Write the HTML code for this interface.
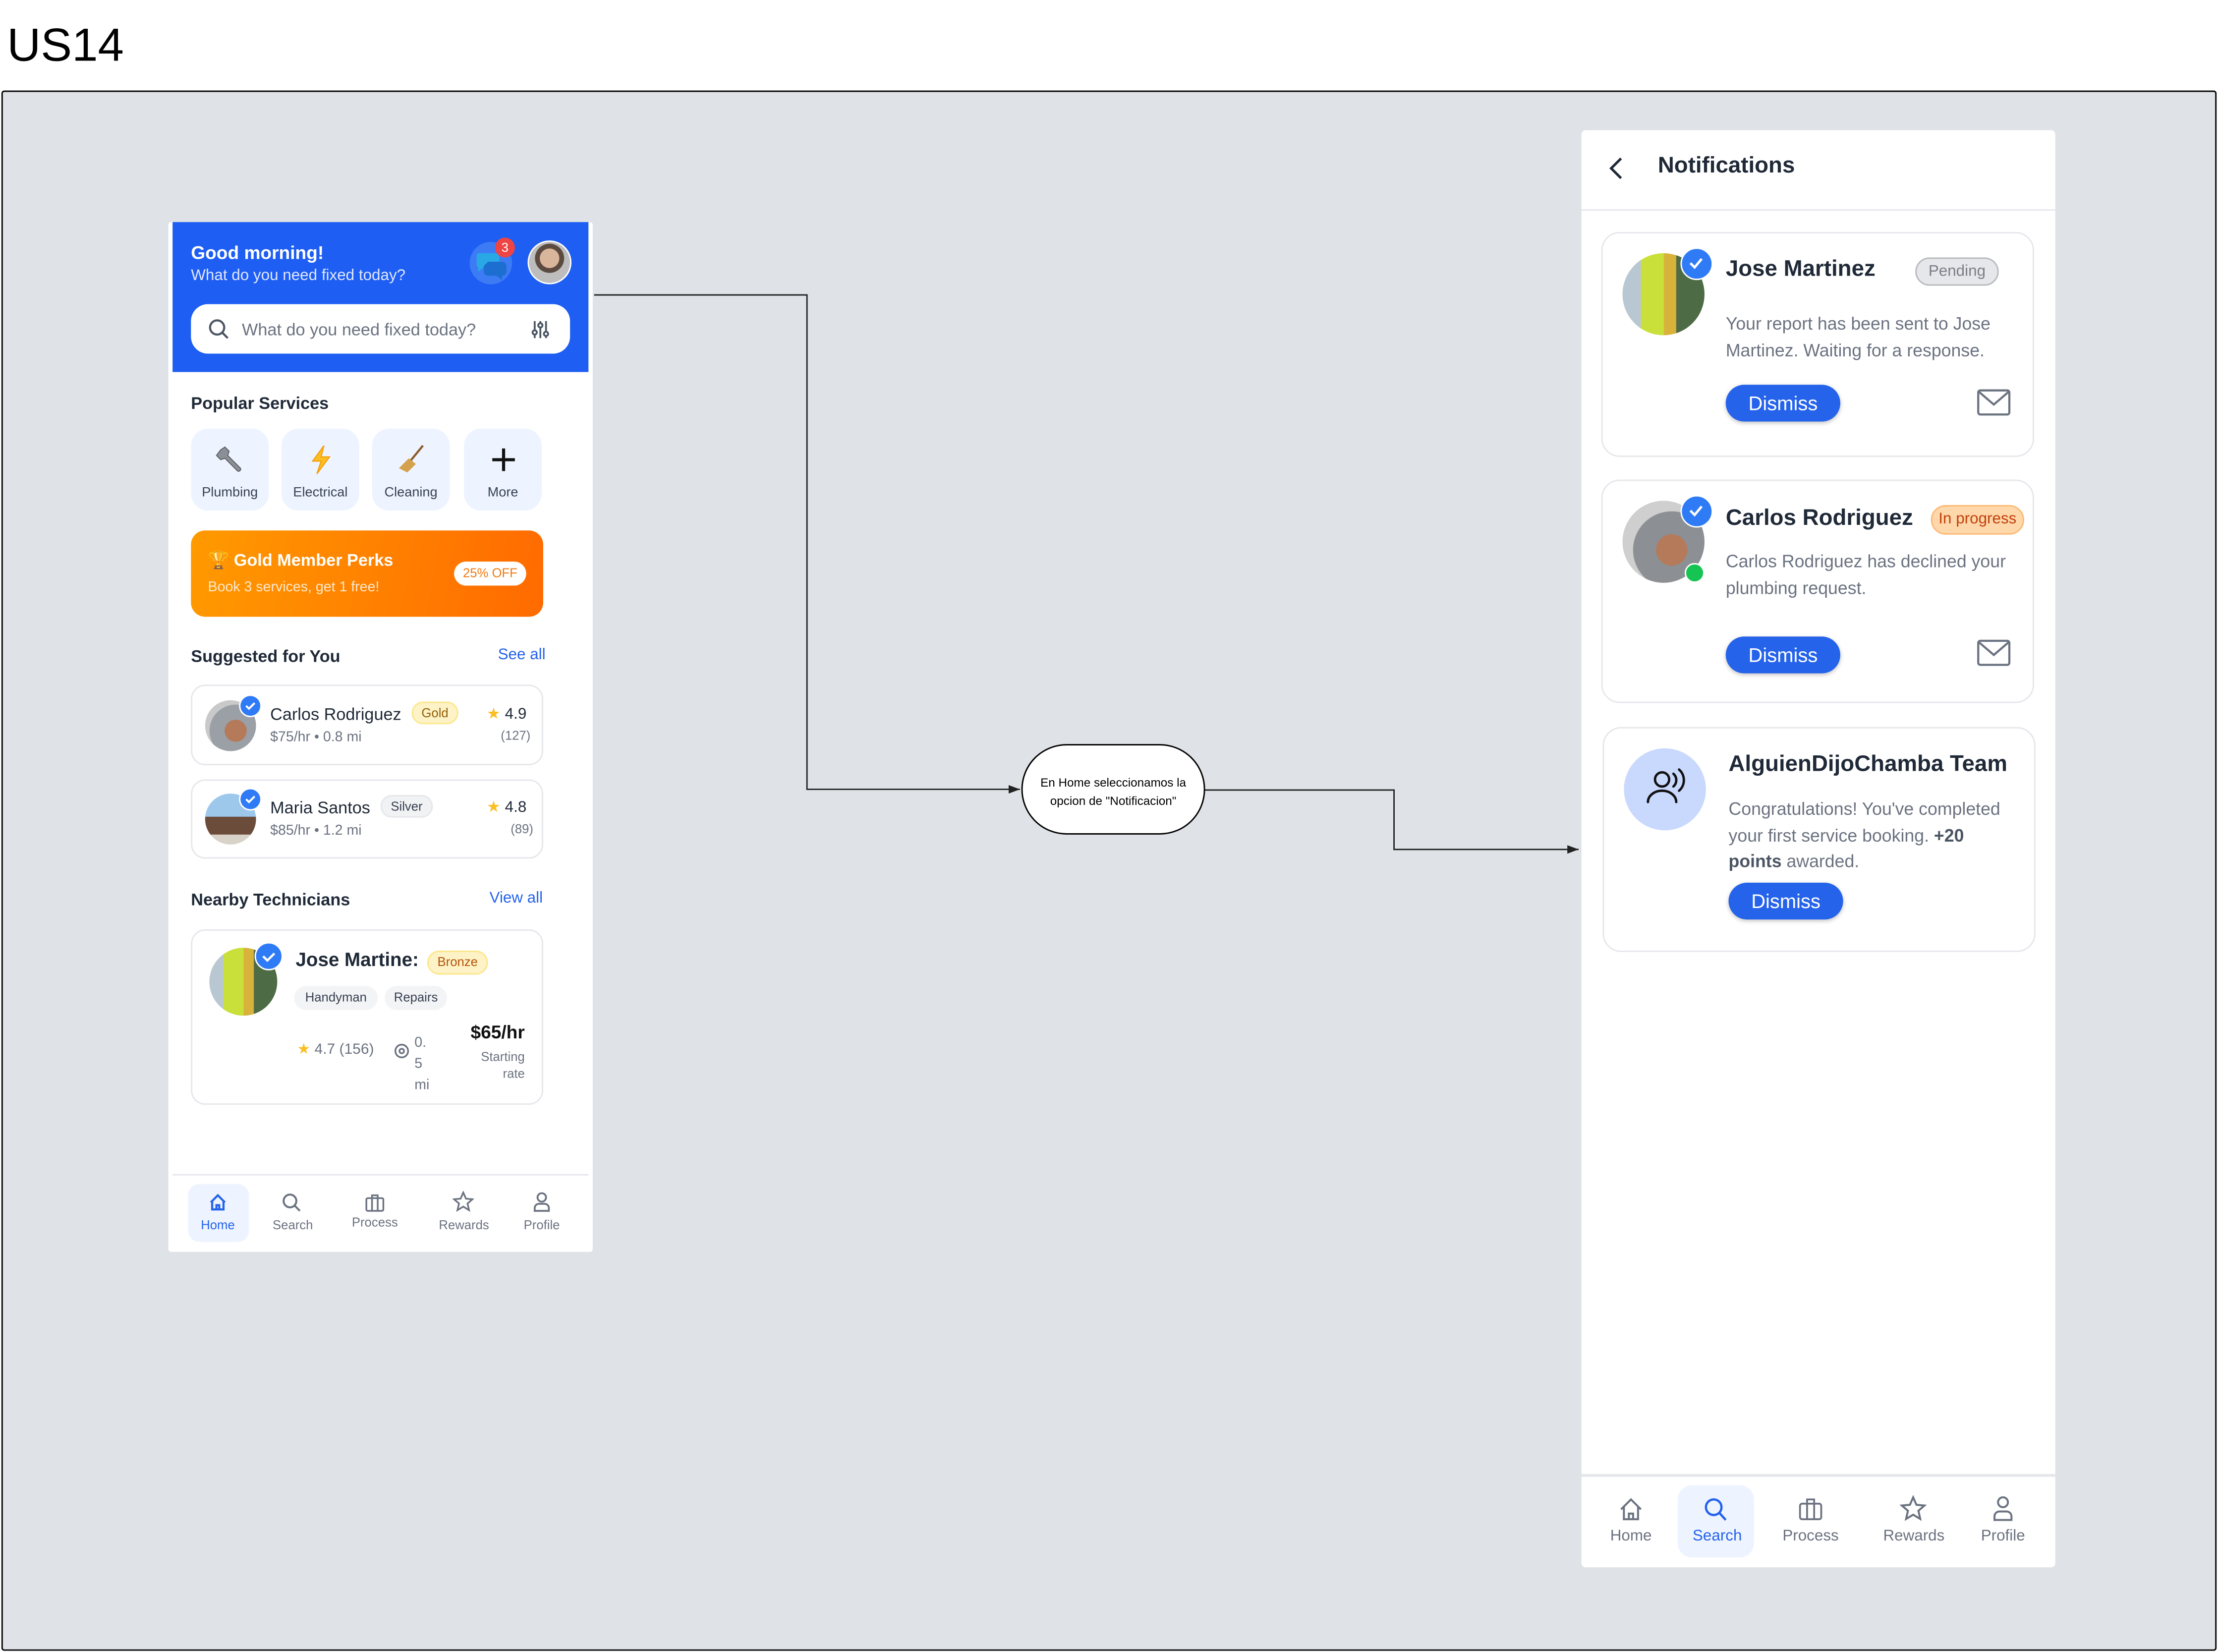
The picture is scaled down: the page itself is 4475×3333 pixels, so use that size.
<!DOCTYPE html>
<html><head><meta charset="utf-8">
<style>
*{margin:0;padding:0;box-sizing:border-box}
html,body{width:4475px;height:3332px;overflow:hidden;background:#fff}
#w{position:absolute;left:0;top:0;width:1568px;height:1168px;transform:scale(2.85395);transform-origin:0 0;font-family:"Liberation Sans",sans-serif;color:#1f2937}
.a{position:absolute;line-height:1;white-space:nowrap}
.card{position:absolute;background:#fff;border:1.5px solid #e5e7eb;border-radius:10px}
.tile{position:absolute;top:303px;width:55px;height:58px;background:#eef4ff;border-radius:12px;text-align:center}
.tile .l{position:absolute;left:0;right:0;top:40px;font-size:9.5px;color:#374151}
.tile svg{position:absolute;left:17px;top:11px}
.chk{position:absolute;border-radius:50%;background:#2f7bf6;border:1.5px solid #fff}
.btn{position:absolute;background:#2563eb;color:#fff;border-radius:13px;font-size:14px;text-align:center;line-height:26px;box-shadow:0 1px 3px rgba(0,0,0,.25)}
.nl{position:absolute;font-size:9px;color:#6b7280;text-align:center;width:60px}
.nl2{position:absolute;font-size:11px;color:#6b7280;text-align:center;width:70px}
</style></head><body><div id="w">
<div class="a" style="left:5px;top:15px;font-size:33px;color:#000">US14</div>
<div class="a" style="left:1px;top:64px;width:1566px;height:1103px;border:1.5px solid #000;background:#dfe2e6;border-radius:2px"></div>

<svg class="a" style="left:0;top:0" width="1568" height="1168">
<defs><marker id="ar" markerWidth="8" markerHeight="6" refX="8" refY="3" orient="auto"><path d="M0,0 L8,3 L0,6z" fill="#222"/></marker></defs>
<path d="M420,208.5 H570.5 V558 H721" fill="none" stroke="#222" stroke-width="1" marker-end="url(#ar)"/>
<path d="M852,558.5 H985.5 V600.5 H1116" fill="none" stroke="#222" stroke-width="1" marker-end="url(#ar)"/>
</svg>
<div class="a" style="left:722px;top:526px;width:130px;height:64px;border:1px solid #000;border-radius:32px;background:#fff"></div>
<div class="a" style="left:722px;top:547px;width:130px;text-align:center;font-size:8.5px;line-height:13px;color:#000">En Home seleccionamos la<br>opcion de "Notificacion"</div>

<div class="a" style="left:119px;top:157px;width:300px;height:728px;background:#fff;border-radius:2px"></div>
<div class="a" style="left:122px;top:157px;width:294px;height:106px;background:#1e5ef3"></div>
<div class="a" style="left:135px;top:172px;font-size:13px;font-weight:bold;color:#fff">Good morning!</div>
<div class="a" style="left:135px;top:190px;font-size:11px;color:#e0e8ff">What do you need fixed today?</div>
<div class="a" style="left:332px;top:171px;width:30px;height:30px;border-radius:50%;background:#3d7bf5"></div>
<svg class="a" style="left:336px;top:175px" width="24" height="24"><path d="M2,4 h12 a3,3 0 0 1 3,3 v4 a3,3 0 0 1 -3,3 h-8 l-4,3 v-3 a3,3 0 0 1 -1,-2 v-5 a3,3 0 0 1 1,-3z" fill="#29a8e6"/><path d="M9,10 h10 a3,3 0 0 1 3,3 v4 a3,3 0 0 1 -3,3 v3 l-4,-3 h-6 a3,3 0 0 1 -3,-3 v-4z" fill="#1c6fd1"/></svg>
<div class="a" style="left:350px;top:168px;width:14px;height:14px;border-radius:50%;background:#ef4444;color:#fff;font-size:9px;text-align:center;line-height:14px">3</div>
<div class="a" style="left:373px;top:170px;width:31px;height:31px;border-radius:50%;background:radial-gradient(circle at 50% 40%,#d9b59b 0 30%,#5b4a40 31% 45%,#bdbdbd 46%);border:1px solid #fff"></div>
<div class="a" style="left:135px;top:215px;width:268px;height:35px;background:#fff;border-radius:12px"></div>
<svg class="a" style="left:147px;top:225px" width="15" height="15"><circle cx="6.5" cy="6.5" r="5" fill="none" stroke="#4b5563" stroke-width="1.5"/><path d="M10,10 L14,14" stroke="#4b5563" stroke-width="1.5"/></svg>
<div class="a" style="left:171px;top:227px;font-size:12px;color:#6b7280">What do you need fixed today?</div>
<svg class="a" style="left:375px;top:226px" width="14" height="14" stroke="#4b5563" stroke-width="1.3" fill="none"><path d="M3,1v12M7,1v12M11,1v12"/><circle cx="3" cy="9" r="1.5" fill="#fff"/><circle cx="7" cy="4" r="1.5" fill="#fff"/><circle cx="11" cy="10" r="1.5" fill="#fff"/></svg>

<div class="a" style="left:135px;top:279px;font-size:12px;font-weight:bold;color:#1f2937">Popular Services</div>
<div class="tile" style="left:135px"><svg width="22" height="22"><path d="M4,4 l3,-2 3,3 -1,3 9,9 a1.5,1.5 0 0 1 -2,2 l-9,-9 -3,1 -3,-3z" fill="#8a8f98" stroke="#555" stroke-width=".6"/></svg><div class="l">Plumbing</div></div>
<div class="tile" style="left:199px"><svg width="22" height="22"><path d="M13,1 L5,12 h6 l-3,9 9,-12 h-6z" fill="#fbbf24" stroke="#f59e0b" stroke-width=".8"/></svg><div class="l">Electrical</div></div>
<div class="tile" style="left:263px"><svg width="22" height="22"><path d="M19,1 L10,12" stroke="#8b5a2b" stroke-width="1.5"/><path d="M9,10 l5,4 -6,6 -6,-3z" fill="#d4a24c"/></svg><div class="l">Cleaning</div></div>
<div class="tile" style="left:328px"><svg width="22" height="22"><path d="M11,3v16M3,11h16" stroke="#111" stroke-width="2.2"/></svg><div class="l">More</div></div>

<div class="a" style="left:135px;top:375px;width:249px;height:61px;border-radius:10px;background:linear-gradient(100deg,#ff9a00,#ff6a00)"></div>
<div class="a" style="left:147px;top:390px;font-size:12px;font-weight:bold;color:#fff">🏆 Gold Member Perks</div>
<div class="a" style="left:147px;top:411px;font-size:10px;color:#ffe8cc">Book 3 services, get 1 free!</div>
<div class="a" style="left:321px;top:397px;width:51px;height:17px;border-radius:9px;background:#fff;color:#f07a10;font-size:9px;text-align:center;line-height:17px">25% OFF</div>

<div class="a" style="left:135px;top:458px;font-size:12px;font-weight:bold">Suggested for You</div>
<div class="a" style="left:352px;top:458px;font-size:11px;color:#2563eb">See all</div>

<div class="card" style="left:135px;top:484px;width:249px;height:57px"></div>
<div class="a" style="left:145px;top:495px;width:36px;height:36px;border-radius:50%;background:radial-gradient(circle at 60% 60%,#b47a5a 0 25%,#9aa0a6 26% 60%,#c9c9c9 61%)"></div>
<div class="chk" style="left:169px;top:491px;width:16px;height:16px"></div>
<svg class="a" style="left:172px;top:494px" width="10" height="10"><path d="M2,5 l2,2 4,-4" stroke="#fff" stroke-width="1.4" fill="none"/></svg>
<div class="a" style="left:191px;top:499px;font-size:12px;color:#1f2937">Carlos Rodriguez</div>
<div class="a" style="left:291px;top:496px;width:33px;height:16px;border-radius:8px;background:#fef3c7;border:1px solid #fde68a;font-size:9px;color:#92600a;text-align:center;line-height:14px">Gold</div>
<div class="a" style="left:191px;top:517px;font-size:10px;color:#6b7280">$75/hr • 0.8 mi</div>
<div class="a" style="left:344px;top:500px;font-size:11px;color:#1f2937"><span style="color:#fbbf24">★</span> 4.9</div>
<div class="a" style="left:354px;top:516px;font-size:9px;color:#6b7280">(127)</div>

<div class="card" style="left:135px;top:551px;width:249px;height:56px"></div>
<div class="a" style="left:145px;top:561px;width:36px;height:36px;border-radius:50%;background:linear-gradient(#9dc8ec 0 45%,#6b4b3a 46% 80%,#d8d2c8 81%)"></div>
<div class="chk" style="left:169px;top:557px;width:16px;height:16px"></div>
<svg class="a" style="left:172px;top:560px" width="10" height="10"><path d="M2,5 l2,2 4,-4" stroke="#fff" stroke-width="1.4" fill="none"/></svg>
<div class="a" style="left:191px;top:565px;font-size:12px">Maria Santos</div>
<div class="a" style="left:269px;top:562px;width:37px;height:16px;border-radius:8px;background:#f1f2f4;border:1px solid #e5e7eb;font-size:9px;color:#374151;text-align:center;line-height:14px">Silver</div>
<div class="a" style="left:191px;top:583px;font-size:10px;color:#6b7280">$85/hr • 1.2 mi</div>
<div class="a" style="left:344px;top:566px;font-size:11px"><span style="color:#fbbf24">★</span> 4.8</div>
<div class="a" style="left:361px;top:582px;font-size:9px;color:#6b7280">(89)</div>

<div class="a" style="left:135px;top:630px;font-size:12px;font-weight:bold">Nearby Technicians</div>
<div class="a" style="left:346px;top:630px;font-size:11px;color:#2563eb">View all</div>

<div class="card" style="left:135px;top:657px;width:249px;height:124px"></div>
<div class="a" style="left:148px;top:670px;width:48px;height:48px;border-radius:50%;background:linear-gradient(90deg,#b9c7d3 0 20%,#c9e03a 21% 50%,#d8b23a 51% 65%,#4d6b45 66%)"></div>
<div class="chk" style="left:180px;top:666px;width:20px;height:20px"></div>
<svg class="a" style="left:184px;top:670px" width="12" height="12"><path d="M2,6 l3,3 5,-5" stroke="#fff" stroke-width="1.6" fill="none"/></svg>
<div class="a" style="left:209px;top:672px;font-size:13.5px;font-weight:bold;color:#1f2937">Jose Martine:</div>
<div class="a" style="left:302px;top:672px;width:43px;height:17px;border-radius:9px;background:#fef3c7;border:1px solid #fde68a;font-size:9px;color:#b45309;text-align:center;line-height:15px">Bronze</div>
<div class="a" style="left:208px;top:697px;width:59px;height:17px;border-radius:9px;background:#f3f4f6;font-size:9px;color:#374151;text-align:center;line-height:17px">Handyman</div>
<div class="a" style="left:272px;top:697px;width:44px;height:17px;border-radius:9px;background:#f3f4f6;font-size:9px;color:#374151;text-align:center;line-height:17px">Repairs</div>
<div class="a" style="left:210px;top:737px;font-size:10.5px;color:#6b7280"><span style="color:#fbbf24">★</span> 4.7 (156)</div>
<svg class="a" style="left:278px;top:737px" width="12" height="12"><circle cx="6" cy="6" r="4.5" fill="none" stroke="#6b7280" stroke-width="1.2"/><circle cx="6" cy="6" r="1.6" fill="none" stroke="#6b7280" stroke-width="1.2"/></svg>
<div class="a" style="left:293px;top:730px;font-size:10px;color:#6b7280;line-height:15px;white-space:normal">0.<br>5<br>mi</div>
<div class="a" style="left:300px;top:723px;width:71px;text-align:right;font-size:13px;font-weight:bold;color:#111">$65/hr</div>
<div class="a" style="left:300px;top:741px;width:71px;text-align:right;font-size:9px;color:#6b7280;line-height:12px">Starting<br>rate</div>

<div class="a" style="left:122px;top:830px;width:294px;height:1px;background:#e5e7eb"></div>
<div class="a" style="left:133px;top:837px;width:43px;height:41px;border-radius:8px;background:#eef4ff"></div>
<svg class="a" style="left:147px;top:843px" width="14" height="14" fill="none" stroke="#2563eb" stroke-width="1.5"><path d="M2,7 L7,2 12,7 M3,6 v6 h8 v-6 M6,12 v-3 h2 v3"/></svg>
<div class="nl" style="left:124px;top:861px;color:#2563eb">Home</div>
<svg class="a" style="left:199px;top:843px" width="14" height="14" fill="none" stroke="#6b7280" stroke-width="1.4"><circle cx="6" cy="6" r="4.5"/><path d="M9.5,9.5 L13,13"/></svg>
<div class="nl" style="left:177px;top:861px">Search</div>
<svg class="a" style="left:258px;top:843px" width="14" height="14" fill="none" stroke="#6b7280" stroke-width="1.2"><rect x="1" y="4" width="12" height="9" rx="1"/><path d="M5,4 v-2 h4 v2 M5,4 v9 M9,4 v9"/></svg>
<div class="nl" style="left:235px;top:859px">Process</div>
<svg class="a" style="left:320px;top:842px" width="15" height="15" fill="none" stroke="#6b7280" stroke-width="1.2"><path d="M7.5,1 L9.4,5.4 14,5.8 10.5,8.8 11.6,13.5 7.5,11 3.4,13.5 4.5,8.8 1,5.8 5.6,5.4z"/></svg>
<div class="nl" style="left:298px;top:861px">Rewards</div>
<svg class="a" style="left:376px;top:842px" width="14" height="15" fill="none" stroke="#6b7280" stroke-width="1.3"><circle cx="7" cy="4.5" r="3"/><path d="M2,14 v-2 a3,3 0 0 1 3,-3 h4 a3,3 0 0 1 3,3 v2z"/></svg>
<div class="nl" style="left:353px;top:861px">Profile</div>

<div class="a" style="left:1118px;top:92px;width:335px;height:1016px;background:#fff;border-radius:3px"></div>
<svg class="a" style="left:1134px;top:109px" width="16" height="20"><path d="M12,3 L5,10 12,17" stroke="#1f2937" stroke-width="1.8" fill="none"/></svg>
<div class="a" style="left:1172px;top:110px;font-size:16px;font-weight:bold;color:#1f2937">Notifications</div>
<div class="a" style="left:1118px;top:148px;width:335px;height:1px;background:#e5e7eb"></div>

<div class="card" style="left:1132px;top:164px;width:306px;height:159px;border-radius:13px"></div>
<div class="a" style="left:1147px;top:179px;width:58px;height:58px;border-radius:50%;background:linear-gradient(90deg,#b9c7d3 0 22%,#c9e03a 23% 50%,#d8b23a 51% 65%,#4d6b45 66%)"></div>
<div class="chk" style="left:1188px;top:175px;width:23px;height:23px"></div>
<svg class="a" style="left:1192px;top:179px" width="14" height="14"><path d="M3,7 l3,3 5,-6" stroke="#fff" stroke-width="1.7" fill="none"/></svg>
<div class="a" style="left:1220px;top:183px;font-size:16px;font-weight:bold;color:#1f2937">Jose Martinez</div>
<div class="a" style="left:1354px;top:182px;width:59px;height:20px;border-radius:10px;background:#e5e7eb;border:1px solid #b7b9bd;font-size:11px;color:#7b7f86;text-align:center;line-height:18px">Pending</div>
<div class="a" style="left:1220px;top:220px;font-size:12.5px;color:#6b7280;line-height:18.5px">Your report has been sent to Jose<br>Martinez. Waiting for a response.</div>
<div class="btn" style="left:1220px;top:272px;width:81px;height:26px">Dismiss</div>
<svg class="a" style="left:1397px;top:274px" width="26" height="22" fill="none" stroke="#6b7280" stroke-width="1.5"><rect x="1.5" y="2" width="22" height="17" rx="1.5"/><path d="M2,3 L12.5,12 23,3"/></svg>

<div class="card" style="left:1132px;top:339px;width:306px;height:158px;border-radius:13px"></div>
<div class="a" style="left:1147px;top:354px;width:58px;height:58px;border-radius:50%;background:radial-gradient(circle at 60% 60%,#b47a5a 0 22%,#8c8f93 23% 55%,#cfcfcf 56%)"></div>
<div class="chk" style="left:1188px;top:350px;width:23px;height:23px"></div>
<svg class="a" style="left:1192px;top:354px" width="14" height="14"><path d="M3,7 l3,3 5,-6" stroke="#fff" stroke-width="1.7" fill="none"/></svg>
<div class="a" style="left:1191px;top:398px;width:14px;height:14px;border-radius:50%;background:#16c454;border:1.5px solid #fff"></div>
<div class="a" style="left:1220px;top:359px;font-size:16px;font-weight:bold;color:#1f2937">Carlos Rodriguez</div>
<div class="a" style="left:1365px;top:357px;width:66px;height:21px;border-radius:11px;background:#fed7aa;border:1px solid #fdba74;font-size:11px;color:#c2410c;text-align:center;line-height:19px">In progress</div>
<div class="a" style="left:1220px;top:388px;font-size:12.5px;color:#6b7280;line-height:18.5px">Carlos Rodriguez has declined your<br>plumbing request.</div>
<div class="btn" style="left:1220px;top:450px;width:81px;height:26px">Dismiss</div>
<svg class="a" style="left:1397px;top:451px" width="26" height="22" fill="none" stroke="#6b7280" stroke-width="1.5"><rect x="1.5" y="2" width="22" height="17" rx="1.5"/><path d="M2,3 L12.5,12 23,3"/></svg>

<div class="card" style="left:1133px;top:514px;width:306px;height:159px;border-radius:13px"></div>
<div class="a" style="left:1148px;top:529px;width:58px;height:58px;border-radius:50%;background:#c9d8fd"></div>
<svg class="a" style="left:1160px;top:541px" width="34" height="34" fill="none" stroke="#111" stroke-width="1.7" stroke-linecap="round"><circle cx="15" cy="10" r="5"/><path d="M5,26 a10,8 0 0 1 20,0"/><path d="M23,6 a6,6 0 0 1 0,9 M27,3 a10,10 0 0 1 0,15"/></svg>
<div class="a" style="left:1222px;top:533px;font-size:16px;font-weight:bold;color:#1f2937">AlguienDijoChamba Team</div>
<div class="a" style="left:1222px;top:563px;font-size:12.5px;color:#6b7280;line-height:18.5px">Congratulations! You've completed<br>your first service booking. <b style="color:#4b5563">+20</b><br><b style="color:#4b5563">points</b> awarded.</div>
<div class="btn" style="left:1222px;top:624px;width:81px;height:26px">Dismiss</div>

<div class="a" style="left:1118px;top:1042px;width:335px;height:1.5px;background:#e5e7eb"></div>
<div class="a" style="left:1186px;top:1050px;width:54px;height:51px;border-radius:10px;background:#eef4ff"></div>
<svg class="a" style="left:1144px;top:1058px" width="18" height="18" fill="none" stroke="#6b7280" stroke-width="1.4"><path d="M2,9 L9,2 16,9 M4,7.5 v8.5 h10 v-8.5 M7.5,16 v-4 h3 v4"/></svg>
<div class="nl2" style="left:1118px;top:1080px">Home</div>
<svg class="a" style="left:1204px;top:1058px" width="18" height="18" fill="none" stroke="#2563eb" stroke-width="1.6"><circle cx="7.5" cy="7.5" r="5.5"/><path d="M11.5,11.5 L16,16.5"/></svg>
<div class="nl2" style="left:1179px;top:1080px;color:#2563eb">Search</div>
<svg class="a" style="left:1271px;top:1058px" width="18" height="18" fill="none" stroke="#6b7280" stroke-width="1.3"><rect x="1.5" y="5" width="15" height="11" rx="1.5"/><path d="M6.5,5 v-3 h5 v3 M6.5,5 v11 M11.5,5 v11"/></svg>
<div class="nl2" style="left:1245px;top:1080px">Process</div>
<svg class="a" style="left:1343px;top:1057px" width="19" height="19" fill="none" stroke="#6b7280" stroke-width="1.4"><path d="M9.5,1.5 L11.8,6.8 17.5,7.3 13.2,11 14.5,16.8 9.5,13.8 4.5,16.8 5.8,11 1.5,7.3 7.2,6.8z"/></svg>
<div class="nl2" style="left:1318px;top:1080px">Rewards</div>
<svg class="a" style="left:1407px;top:1057px" width="18" height="19" fill="none" stroke="#6b7280" stroke-width="1.4"><circle cx="9" cy="5" r="3.5"/><path d="M3,17.5 v-2.5 a3.5,3.5 0 0 1 3.5,-3.5 h5 a3.5,3.5 0 0 1 3.5,3.5 v2.5z"/></svg>
<div class="nl2" style="left:1381px;top:1080px">Profile</div>
</div></body></html>
